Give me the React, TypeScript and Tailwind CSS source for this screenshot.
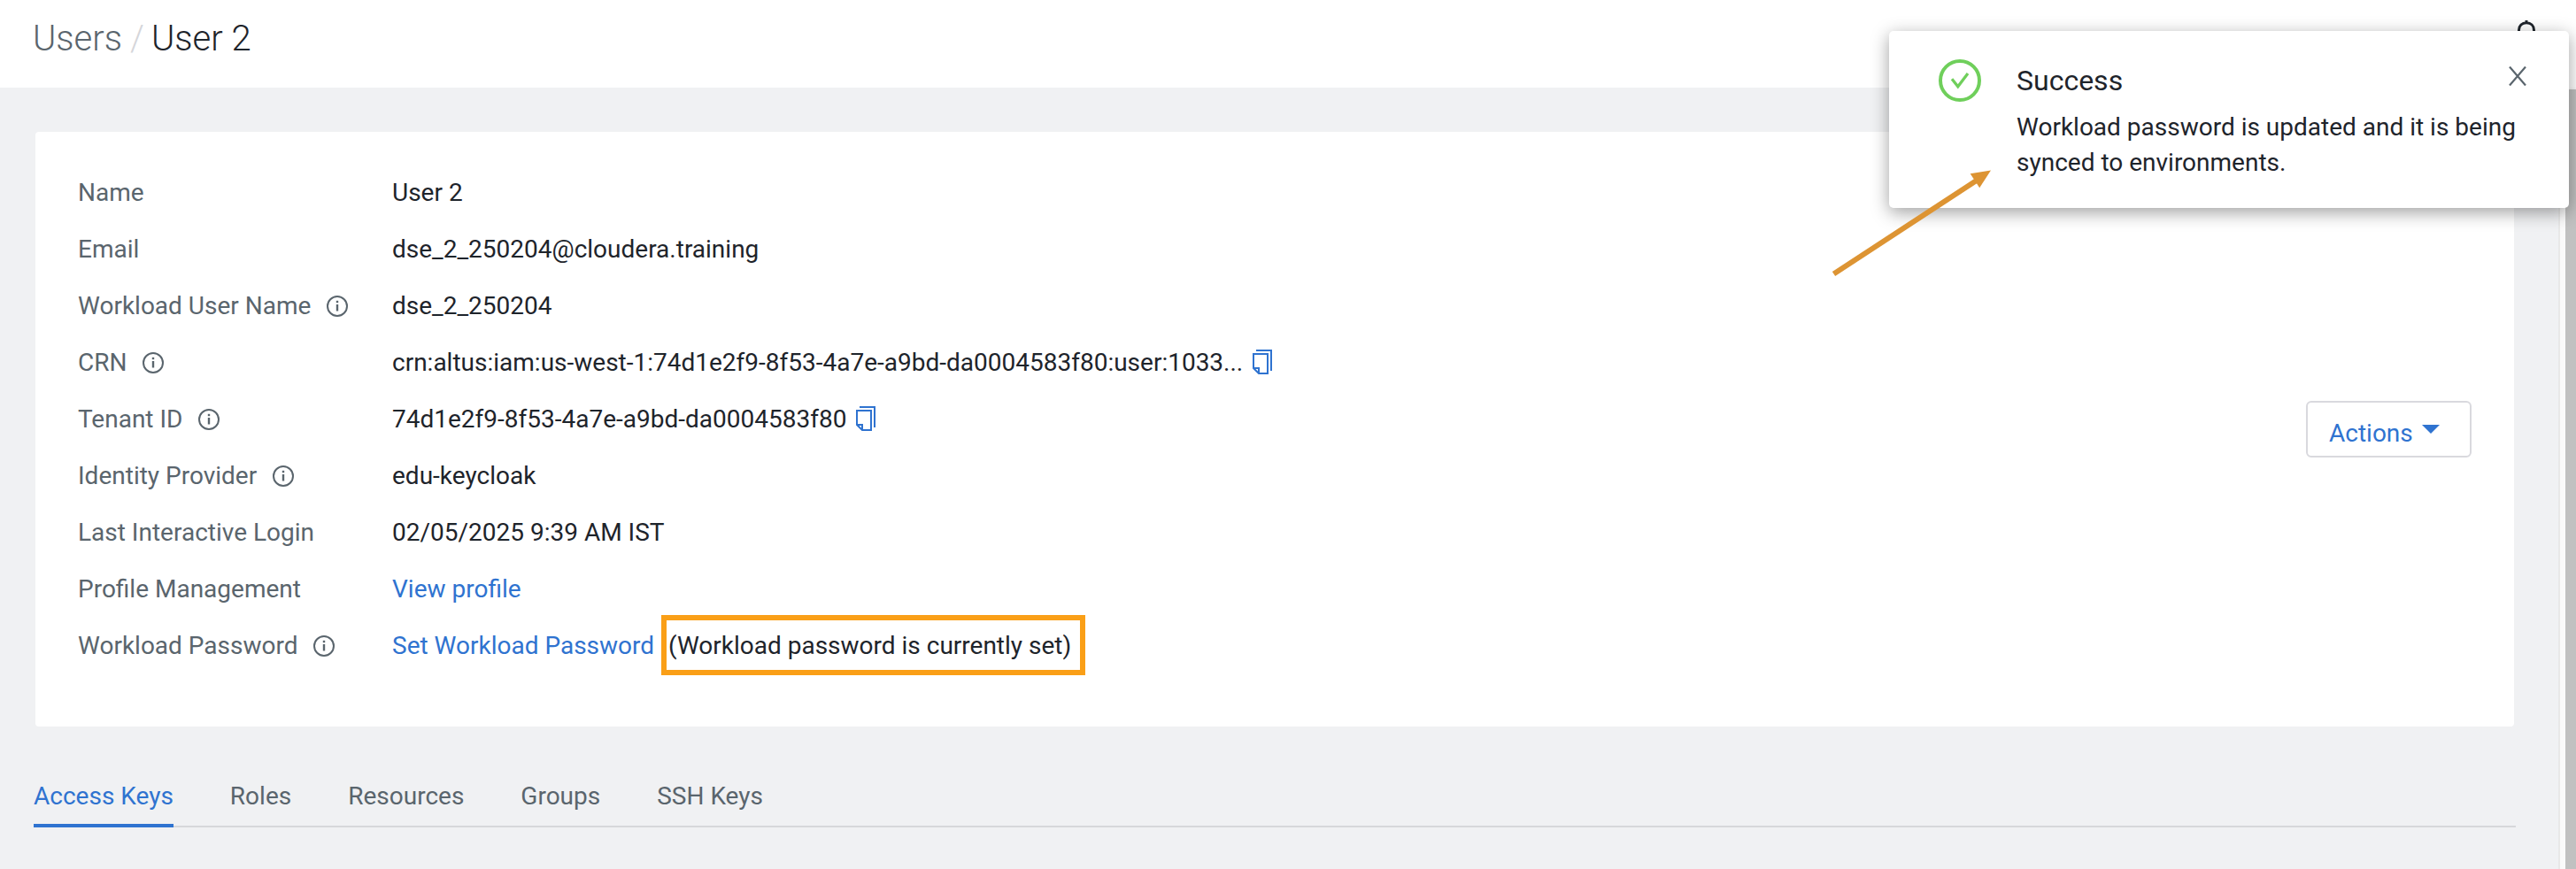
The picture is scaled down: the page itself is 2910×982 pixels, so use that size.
import type { ReactNode } from "react";

function InfoIcon() {
  return (
    <svg className="ml-[17.5px] size-6 shrink-0" viewBox="0 0 24 24" fill="none" stroke="#5a656d">
      <circle cx="12" cy="12" r="11" strokeWidth="2" />
      <path d="M12 10V17.5" strokeWidth="2.4" />
      <path d="M12 5.8V8.2" strokeWidth="2.4" />
    </svg>
  );
}

function CopyIcon() {
  return (
    <svg className="mb-0.5 ml-[11px] h-7 w-[22px] shrink-0" viewBox="0 0 22 28" fill="none" stroke="#2f73d0" strokeWidth="2">
      <path d="M4 1H21V24" />
      <path d="M1 5H17V27H7L1 21Z" />
      <path d="M1 21H7V27" />
    </svg>
  );
}

type RowProps = { label: string; info?: boolean; children: ReactNode };

function Row({ label, info, children }: RowProps) {
  return (
    <div className="flex h-16 items-center whitespace-nowrap">
      <div className="flex w-[355px] shrink-0 items-center text-[#5a656d]">
        {label}
        {info && <InfoIcon />}
      </div>
      <div className="flex items-center">{children}</div>
    </div>
  );
}

const tabs = ["Access Keys", "Roles", "Resources", "Groups", "SSH Keys"];

function Toast() {
  return (
    <div className="absolute top-[35px] left-[2134px] flex h-[200px] w-[768px] rounded-[5px] bg-white pt-8 pl-14 shadow-[0_5px_20px_rgba(0,0,0,0.38)]">
      <svg className="size-12 shrink-0" viewBox="0 0 48 48" fill="none" stroke="#6fcf5b">
        <circle cx="24" cy="24" r="22" strokeWidth="4" />
        <path d="M15 22.3L21.8 30.8L33 16" strokeWidth="3.2" />
      </svg>
      <div className="ml-10 whitespace-nowrap">
        <div className="h-[57px] text-[32px] leading-[48px]">Success</div>
        <div className="leading-10">
          Workload password is updated and it is being
          <br />
          synced to environments.
        </div>
      </div>
      <svg className="absolute top-10 left-[700px] h-[22px] w-5" viewBox="0 0 20 22" fill="none" stroke="#5a656d" strokeWidth="2.2">
        <path d="M1 0.5L19 21.5M19 0.5L1 21.5" />
      </svg>
    </div>
  );
}

export default function App() {
  return (
    <div className="relative flex h-[982px] w-[2910px] flex-col overflow-hidden bg-[#f0f1f3] font-[Roboto,sans-serif] text-[28px] leading-10 text-[#1e242b]">
      <header className="flex h-[99px] shrink-0 bg-white pt-5 pl-[37px] text-[40px] leading-[48px] font-light whitespace-pre">
        <span className="text-[#5a656d]">Users</span>
        <span className="pr-2 pl-[9px] text-[#d5d6da]">/</span>
        <span>User 2</span>
        <svg className="absolute top-[23px] left-[2843px]" width="22" height="26" viewBox="0 0 22 26" fill="none" stroke="#1e242b" strokeWidth="3">
          <path d="M2.5 20V11C2.5 6 6 2.8 11 2.8S19.500 6 19.500 11V20M11 0V3" />
        </svg>
      </header>

      <div className="flex flex-1">
        <main className="w-[2890px] pt-[50px] pl-[38px]">
          <section className="ml-0.5 flex h-[672px] w-[2800px] items-center justify-between rounded-[4px] bg-white pr-12 pl-12">
            <div className="-mt-[22px]">
              <Row label="Name">User 2</Row>
              <Row label="Email">dse_2_250204@cloudera.training</Row>
              <Row label="Workload User Name" info>dse_2_250204</Row>
              <Row label="CRN" info>
                crn:altus:iam:us-west-1:74d1e2f9-8f53-4a7e-a9bd-da0004583f80:user:1033...
                <CopyIcon />
              </Row>
              <Row label="Tenant ID" info>
                74d1e2f9-8f53-4a7e-a9bd-da0004583f80
                <CopyIcon />
              </Row>
              <Row label="Identity Provider" info>edu-keycloak</Row>
              <Row label="Last Interactive Login">02/05/2025 9:39 AM IST</Row>
              <Row label="Profile Management">
                <a className="text-[#2f73d0]">View profile</a>
              </Row>
              <Row label="Workload Password" info>
                <a className="text-[#2f73d0]">Set Workload Password</a>
                <span className="relative -top-px -my-2 ml-2 flex h-[68px] w-[479px] items-center border-6 border-[#fa9f17] pt-0.5 pl-0.5">
                  (Workload password is currently set)
                </span>
              </Row>
            </div>
            <button className="flex h-16 w-[187px] items-center rounded-[6px] border-2 border-[#d9d9de] pt-2.5 pl-6 text-[#2f73d0]">
              Actions
              <svg className="mb-2.5 ml-2.5 h-2.5 w-5" viewBox="0 0 20 10" fill="#2f73d0">
                <path d="M0 0H20L10 10Z" />
              </svg>
            </button>
          </section>

          <nav className="mt-[59px] flex h-[55px] w-[2804px] gap-16 border-b-2 border-[#d6d7da] text-[#5a656d]">
            {tabs.map((tab, i) => (
              <div
                key={tab}
                className={i === 0 ? "h-[55px] border-b-4 border-[#2f73d0] text-[#2f73d0]" : "h-[55px]"}
              >
                {tab}
              </div>
            ))}
          </nav>
        </main>
        <div className="flex w-5 border-l-2 border-[#e8e8e8] bg-[#fafafa] pt-0.5 pl-1.5">
          <div className="w-3 bg-[#c1c1c1]" />
        </div>
      </div>

      <Toast />
      <svg className="absolute top-[185px] left-[2065px]" width="190" height="130" viewBox="0 0 190 130">
        <path d="M6.500 124.500L170 17.500" stroke="#dd9433" strokeWidth="6" />
        <path d="M184 7.500L160.700 11.300L171.200 27.300Z" fill="#dd9433" />
      </svg>
    </div>
  );
}
